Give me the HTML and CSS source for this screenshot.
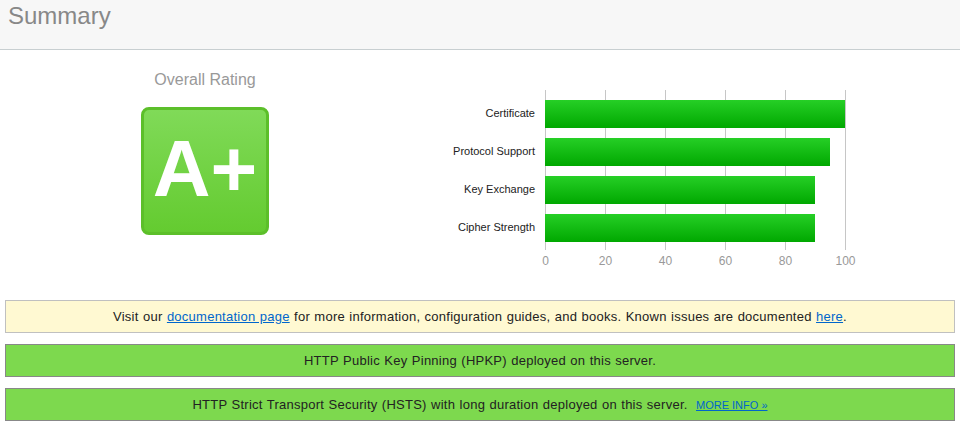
FILE: index.html
```html
<!DOCTYPE html>
<html lang="en">

<head>
    <meta charset="UTF-8">
    <title>SSL Report: Summary</title>
    <link rel="stylesheet" href="styles.css">
</head>

<body>

    <div class="section-title">Summary</div>

    <div class="summary">
        <div class="rating">
            <div class="rating-title">Overall Rating</div>
            <div class="grade">A+</div>
        </div>

        <div class="chart">
            <div class="chart-body">
                <div class="chart-labels">
                    <div>Certificate</div>
                    <div>Protocol Support</div>
                    <div>Key Exchange</div>
                    <div>Cipher Strength</div>
                </div>
                <div class="plot">
                    <div class="bar" style="width: 300px"></div>
                    <div class="bar" style="width: 285px"></div>
                    <div class="bar" style="width: 270px"></div>
                    <div class="bar" style="width: 270px"></div>
                </div>
            </div>
            <div class="ticks">
                <span>0</span>
                <span>20</span>
                <span>40</span>
                <span>60</span>
                <span>80</span>
                <span>100</span>
            </div>
        </div>
    </div>

    <div class="notice info">
        Visit our <a href="#">documentation page</a> for more information, configuration guides, and books. Known issues are documented <a href="#">here</a>.
    </div>
    <div class="notice good">
        HTTP Public Key Pinning (HPKP) deployed on this server.
    </div>
    <div class="notice good">
        HTTP Strict Transport Security (HSTS) with long duration deployed on this server.
        <a href="#" class="more">MORE INFO &raquo;</a>
    </div>

</body>

</html>
```

FILE: styles.css
```css
* {
    margin: 0;
    padding: 0;
    box-sizing: border-box;
}

body {
    font-family: "Liberation Sans", Arial, sans-serif;
    background: #fff;
    color: #222;
    width: 960px;
}

a {
    color: #0066cc;
}

.section-title {
    height: 50px;
    padding: 2px 8px 0;
    background: #f7f7f7;
    border-bottom: 1px solid #c8cfd1;
    font-size: 24px;
    color: #888;
}

.summary {
    display: flex;
    height: 240px;
}

.rating {
    width: 410px;
    display: flex;
    flex-direction: column;
    align-items: center;
    padding-top: 21px;
}

.rating-title {
    font-size: 16px;
    color: #999;
    height: 36px;
}

.grade {
    width: 128px;
    height: 128px;
    border: 3px solid #5cbf2a;
    border-radius: 8px;
    background: linear-gradient(#80da58, #64cb30);
    color: #fff;
    font-size: 80px;
    font-weight: bold;
    line-height: 118px;
    text-align: center;
}

.chart {
    padding-top: 40px;
}

.chart-body {
    display: flex;
    gap: 10px;
}

.chart-labels {
    width: 125px;
    display: flex;
    flex-direction: column;
    gap: 10px;
    padding-top: 9px;
    font-size: 11px;
    text-align: right;
}

.chart-labels div {
    height: 28px;
    line-height: 28px;
}

.plot {
    width: 301px;
    height: 160px;
    display: flex;
    flex-direction: column;
    gap: 10px;
    padding-top: 10px;
    background: repeating-linear-gradient(to right, #c6c6c6 0 1px, transparent 1px 60px);
}

.bar {
    height: 28px;
    background: linear-gradient(#26cf26, #00a800);
}

.ticks {
    display: flex;
    justify-content: space-between;
    width: 301px;
    margin-left: 135px;
    padding-top: 4px;
    font-size: 12px;
    color: #999;
}

.ticks span {
    width: 1px;
    display: flex;
    justify-content: center;
}

.notice {
    margin: 10px 5px 0;
    height: 33px;
    border: 1px solid #888;
    line-height: 31px;
    text-align: center;
    font-size: 13px;
    letter-spacing: 0.25px;
    word-spacing: 0.5px;
}

.notice.info {
    background: #fff9d2;
    border-color: #c0c0c0;
}

.notice.good {
    margin-top: 11px;
    background: #7dd94e;
}

.notice a.more {
    margin-left: 4px;
    font-size: 11px;
    letter-spacing: 0;
    word-spacing: 0;
}
```
